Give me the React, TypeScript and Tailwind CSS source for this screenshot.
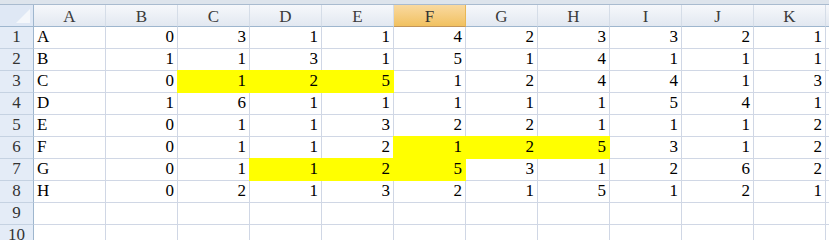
const cols = ["A", "B", "C", "D", "E", "F", "G", "H", "I", "J", "K"];

const rows: (string | number)[][] = [
  ["A", 0, 3, 1, 1, 4, 2, 3, 3, 2, 1],
  ["B", 1, 1, 3, 1, 5, 1, 4, 1, 1, 1],
  ["C", 0, 1, 2, 5, 1, 2, 4, 4, 1, 3],
  ["D", 1, 6, 1, 1, 1, 1, 1, 5, 4, 1],
  ["E", 0, 1, 1, 3, 2, 2, 1, 1, 1, 2],
  ["F", 0, 1, 1, 2, 1, 2, 5, 3, 1, 2],
  ["G", 0, 1, 1, 2, 5, 3, 1, 2, 6, 2],
  ["H", 0, 2, 1, 3, 2, 1, 5, 1, 2, 1],
  [],
  [],
];

// row index -> highlighted column indexes
const yellow: Record<number, number[]> = {
  2: [2, 3, 4],
  5: [5, 6, 7],
  6: [3, 4, 5],
};

export default function App() {
  return (
    <div className="w-[829px] h-[240px] overflow-hidden bg-white font-['Liberation_Serif',serif] text-[17px] leading-none">
      <div className="h-[5px] bg-[#dde4ec] border-b border-[#a9bbcf]" />

      {/* column headers */}
      <div className="flex h-[22px]">
        <div className="w-[34px] shrink-0 h-full bg-[#dfe8f5] border-r border-b border-[#9eb6ce] flex items-end justify-end pr-[3px] pb-[3px]">
          <svg width="14" height="14" viewBox="0 0 14 14">
            <polygon points="14,0 14,14 0,14" fill="#f4f7fb" />
          </svg>
        </div>
        {cols.map((c) => (
          <div
            key={c}
            className={`w-[72px] shrink-0 h-full border-r border-b flex items-center justify-center pt-[2px] ${
              c === "F"
                ? "bg-gradient-to-b from-[#f9d99f] to-[#f1c15f] border-r-[#e8b755] border-b-[#c2955a] text-[#333]"
                : "bg-gradient-to-b from-[#f6f8fb] to-[#e2e8f1] border-r-[#d5dde8] border-b-[#9eb6ce] text-[#3b3b3b]"
            }`}
          >
            {c}
          </div>
        ))}
        <div className="flex-1 h-full bg-gradient-to-b from-[#f6f8fb] to-[#e2e8f1] border-b border-[#9eb6ce]" />
      </div>

      {rows.map((r, ri) => (
        <div key={ri} className="flex h-[22px]">
          <div className="w-[34px] shrink-0 h-full bg-[#e4ecf7] border-r border-r-[#9eb6ce] border-b border-b-[#c5d2e2] flex items-end justify-center pb-[3px] text-[#333]">
            {ri + 1}
          </div>
          {cols.map((_, ci) => {
            const v = r[ci];
            const hl = (yellow[ri] || []).includes(ci);
            return (
              <div
                key={ci}
                className={`w-[72px] shrink-0 h-full border-r border-b flex items-end pb-[3px] text-black ${
                  ci === 0 ? "justify-start pl-[3px]" : "justify-end pr-[3px]"
                } ${
                  hl
                    ? "bg-[#ffff00] border-[#ffff00] shadow-[-1px_0_0_#ffff00,0_-1px_0_#ffff00,-1px_-1px_0_#ffff00]"
                    : "border-[#d0d7e5]"
                }`}
              >
                {v}
              </div>
            );
          })}
          <div className="flex-1 h-full border-b border-[#d0d7e5]" />
        </div>
      ))}
    </div>
  );
}
